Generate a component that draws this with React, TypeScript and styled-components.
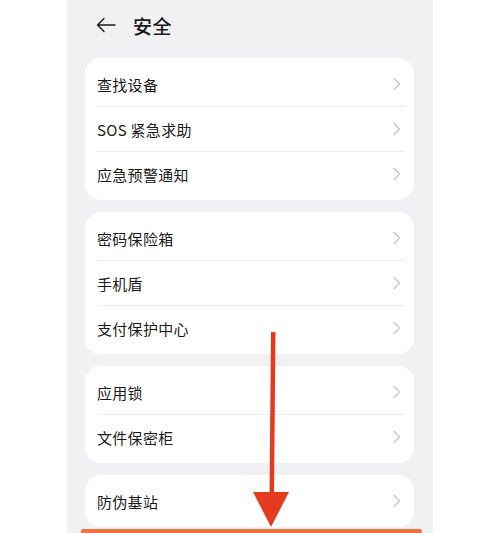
import React from "react";
import styled, { createGlobalStyle } from "styled-components";

const Global = createGlobalStyle`
  html, body { margin: 0; padding: 0; background: #ffffff; }
  body { font-family: "Noto Sans CJK SC", "Noto Sans", sans-serif; }
`;

const Page = styled.div`
  width: 500px;
  height: 533px;
  display: flex;
  justify-content: flex-start;
  overflow: hidden;
  background: #ffffff;
`;

const Phone = styled.div`
  position: relative;
  margin-left: 67px;
  width: 366px;
  height: 533px;
  background: #f1f1f3;
  display: flex;
  flex-direction: column;
  overflow: hidden;
  & > * { flex-shrink: 0; }
`;

const Header = styled.div`
  height: 50px;
  display: flex;
  align-items: center;
  padding-left: 29px;
  gap: 17px;
  margin-bottom: 8px;
`;

const Title = styled.div`
  font-size: 19px;
  font-weight: 500;
  color: #1a1a1a;
  letter-spacing: 0.5px;
`;

const List = styled.div`
  display: flex;
  flex-direction: column;
  gap: 12px;
  padding: 0 19px 0 18px;
`;

const Card = styled.div`
  background: #ffffff;
  border-radius: 16px;
  padding: 4px 0;
`;

const Row = styled.div`
  height: 44px;
  display: flex;
  align-items: center;
  justify-content: space-between;
  padding: 0 13px 0 12px;
`;

const Label = styled.span`
  font-size: 15px;
  color: #1a1a1a;
  letter-spacing: 0.3px;
`;

const Divider = styled.div`
  height: 1px;
  background: #ececee;
  margin: 0 9px 0 12px;
`;

const Highlight = styled.div`
  margin: 2px 11px 0 14px;
  height: 12px;
  background: #f07340;
  border-radius: 2px 2px 0 0;
`;

const ArrowOverlay = styled.svg`
  position: absolute;
  left: 184px;
  top: 330px;
`;

const Chevron = () => (
  <svg width="8" height="14" viewBox="0 0 8 14">
    <path d="M1.2 1.5 L6.5 7 L1.2 12.5" fill="none" stroke="#c4c4c6" strokeWidth="1.3" strokeLinecap="round" strokeLinejoin="round" />
  </svg>
);

const BackArrow = () => (
  <svg width="20" height="16" viewBox="0 0 20 16">
    <path d="M8 1.5 L1.5 8 L8 14.5 M1.5 8 H19" fill="none" stroke="#1a1a1a" strokeWidth="1.4" strokeLinecap="round" strokeLinejoin="round" />
  </svg>
);

const groups: string[][] = [
  ["查找设备", "SOS 紧急求助", "应急预警通知"],
  ["密码保险箱", "手机盾", "支付保护中心"],
  ["应用锁", "文件保密柜"],
  ["防伪基站"],
];

export default function App() {
  return (
    <Page>
      <Global />
      <Phone>
        <Header>
          <BackArrow />
          <Title>安全</Title>
        </Header>
        <List>
          {groups.map((g, gi) => (
            <Card key={gi}>
              {g.map((item, i) => (
                <React.Fragment key={item}>
                  {i > 0 && <Divider />}
                  <Row>
                    <Label>{item}</Label>
                    <Chevron />
                  </Row>
                </React.Fragment>
              ))}
            </Card>
          ))}
        </List>
        <Highlight />
        <ArrowOverlay width="40" height="200" viewBox="0 0 40 200">
          <path d="M20 2 L24.5 2 L23 164 L18.5 164 Z" fill="#e63a1f" />
          <path d="M2 162 L38 162 L20 197 Z" fill="#e63a1f" />
        </ArrowOverlay>
      </Phone>
    </Page>
  );
}
